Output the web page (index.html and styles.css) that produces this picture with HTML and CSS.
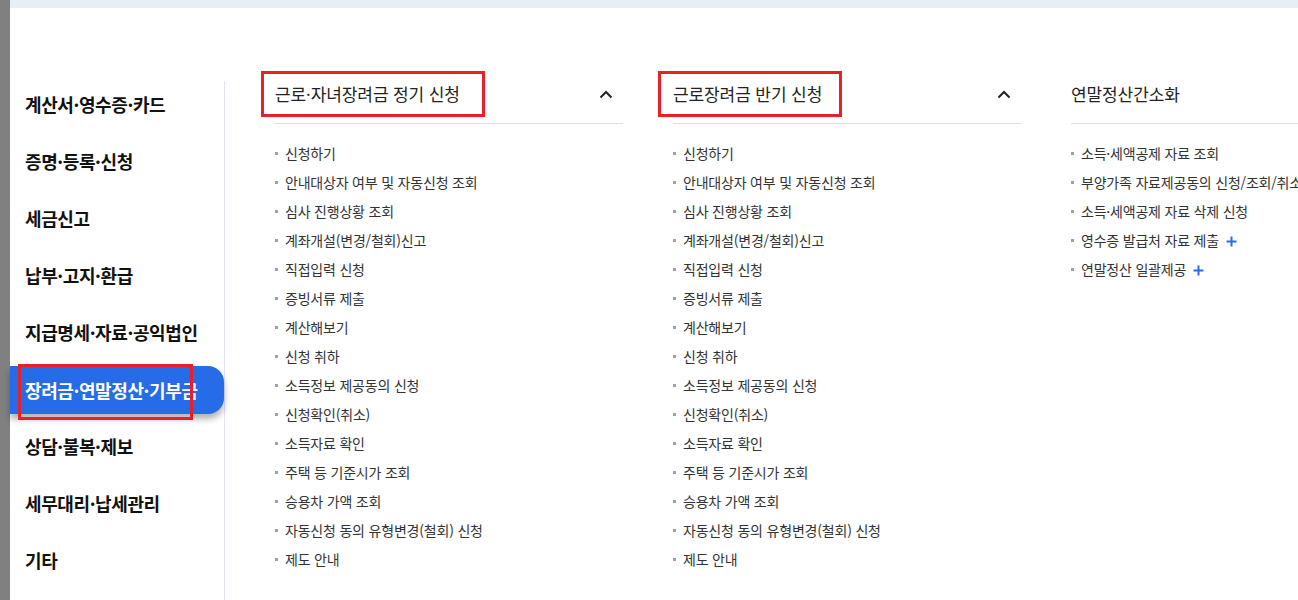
FILE: index.html
```html
<!DOCTYPE html>
<html lang="ko">
<head>
<meta charset="UTF-8">
<meta name="viewport" content="width=device-width, initial-scale=1.0">
<title>장려금·연말정산·기부금</title>
<link rel="stylesheet" href="styles.css">
</head>
<body>
<div class="gutter"></div>
<div class="page">
    <div class="topband"></div>
    <div class="menu">
        <ul class="side">
            <li class="side-item">계산서·영수증·카드</li>
            <li class="side-item">증명·등록·신청</li>
            <li class="side-item">세금신고</li>
            <li class="side-item">납부·고지·환급</li>
            <li class="side-item">지급명세·자료·공익법인</li>
            <li class="side-item active">장려금·연말정산·기부금<span class="mark side-mark"></span></li>
            <li class="side-item">상담·불복·제보</li>
            <li class="side-item">세무대리·납세관리</li>
            <li class="side-item">기타</li>
        </ul>

        <div class="cols">
            <div class="col">
                <div class="col-head">
                    <span class="col-title">근로·자녀장려금 정기 신청<span class="mark mark1"></span></span>
                    <svg class="chev" width="14" height="9" viewBox="0 0 14 9"><polyline points="1.5,7.5 7,2 12.5,7.5" fill="none" stroke="#222" stroke-width="2"/></svg>
                </div>
                <ul class="links">
                    <li>신청하기</li>
                    <li>안내대상자 여부 및 자동신청 조회</li>
                    <li>심사 진행상황 조회</li>
                    <li>계좌개설(변경/철회)신고</li>
                    <li>직접입력 신청</li>
                    <li>증빙서류 제출</li>
                    <li>계산해보기</li>
                    <li>신청 취하</li>
                    <li>소득정보 제공동의 신청</li>
                    <li>신청확인(취소)</li>
                    <li>소득자료 확인</li>
                    <li>주택 등 기준시가 조회</li>
                    <li>승용차 가액 조회</li>
                    <li>자동신청 동의 유형변경(철회) 신청</li>
                    <li>제도 안내</li>
                </ul>
            </div>

            <div class="col">
                <div class="col-head">
                    <span class="col-title">근로장려금 반기 신청<span class="mark mark2"></span></span>
                    <svg class="chev" width="14" height="9" viewBox="0 0 14 9"><polyline points="1.5,7.5 7,2 12.5,7.5" fill="none" stroke="#222" stroke-width="2"/></svg>
                </div>
                <ul class="links">
                    <li>신청하기</li>
                    <li>안내대상자 여부 및 자동신청 조회</li>
                    <li>심사 진행상황 조회</li>
                    <li>계좌개설(변경/철회)신고</li>
                    <li>직접입력 신청</li>
                    <li>증빙서류 제출</li>
                    <li>계산해보기</li>
                    <li>신청 취하</li>
                    <li>소득정보 제공동의 신청</li>
                    <li>신청확인(취소)</li>
                    <li>소득자료 확인</li>
                    <li>주택 등 기준시가 조회</li>
                    <li>승용차 가액 조회</li>
                    <li>자동신청 동의 유형변경(철회) 신청</li>
                    <li>제도 안내</li>
                </ul>
            </div>

            <div class="col">
                <div class="col-head">
                    <span class="col-title">연말정산간소화</span>
                </div>
                <ul class="links">
                    <li>소득·세액공제 자료 조회</li>
                    <li>부양가족 자료제공동의 신청/조회/취소</li>
                    <li>소득·세액공제 자료 삭제 신청</li>
                    <li>영수증 발급처 자료 제출 <svg class="plus" width="11" height="11" viewBox="0 0 11 11"><path d="M5.5 0.5v10M0.5 5.5h10" stroke="#2b6de8" stroke-width="2"/></svg></li>
                    <li>연말정산 일괄제공 <svg class="plus" width="11" height="11" viewBox="0 0 11 11"><path d="M5.5 0.5v10M0.5 5.5h10" stroke="#2b6de8" stroke-width="2"/></svg></li>
                </ul>
            </div>
        </div>
    </div>
</div>
</body>
</html>
```

FILE: styles.css
```css
html, body {
    height: 100%;
}

body {
    margin: 0;
    display: flex;
    overflow: hidden;
    background-color: #fff;
    font-family: "Noto Sans CJK KR", "Noto Sans", sans-serif;
    color: #222;
}

ul {
    list-style: none;
    margin: 0;
    padding: 0;
}

.gutter {
    width: 10px;
    flex-shrink: 0;
    background-color: #808080;
}

.page {
    flex: 1;
    min-width: 0;
}

.topband {
    height: 8px;
    background-color: #e8eef6;
}

.menu {
    display: flex;
    margin-top: 73px;
}

/* left category list */
.side {
    width: 214px;
    flex-shrink: 0;
    border-right: 1px solid #e2e2fa;
    min-height: 520px;
}

.side-item {
    position: relative;
    height: 46px;
    margin-bottom: 11px;
    padding-left: 15px;
    display: flex;
    align-items: center;
    font-size: 18px;
    font-weight: bold;
    letter-spacing: -0.4px;
    color: #111;
    white-space: nowrap;
}

.side-item.active {
    height: 48px;
    margin-bottom: 9px;
    background-color: #266be8;
    color: #fff;
    border-radius: 0 16px 16px 0;
    box-shadow: 0 5px 6px rgba(0, 0, 0, 0.3);
}

/* red annotation boxes */
.mark {
    position: absolute;
    border: 3px solid #ea1f2b;
    pointer-events: none;
}

.side-mark {
    left: 8px;
    top: -2px;
    width: 169px;
    height: 50px;
}

.mark1 {
    left: -14px;
    top: -11px;
    width: 218px;
    height: 40px;
}

.mark2 {
    left: -15px;
    top: -11px;
    width: 178px;
    height: 40px;
}

/* menu columns */
.cols {
    display: flex;
    gap: 50px;
    padding-left: 50px;
}

.col {
    width: 348px;
    flex-shrink: 0;
}

.col-head {
    height: 42px;
    border-bottom: 1px solid #dcdce4;
    display: flex;
    justify-content: space-between;
    align-items: flex-start;
}

.col-title {
    position: relative;
    font-size: 17px;
    line-height: 24px;
    margin-top: 1px;
    letter-spacing: -0.1px;
    white-space: nowrap;
}

.chev {
    margin-top: 9px;
    margin-right: 10px;
}

.links {
    padding-top: 15px;
}

.links li {
    position: relative;
    padding-left: 10px;
    font-size: 14px;
    line-height: 29px;
    color: #333;
    letter-spacing: -0.2px;
    white-space: nowrap;
}

.links li::before {
    content: "";
    position: absolute;
    left: 0;
    top: 13px;
    width: 3px;
    height: 3px;
    background-color: #a0a0a0;
}

.plus {
    margin-left: 3px;
    vertical-align: -1px;
}
```
